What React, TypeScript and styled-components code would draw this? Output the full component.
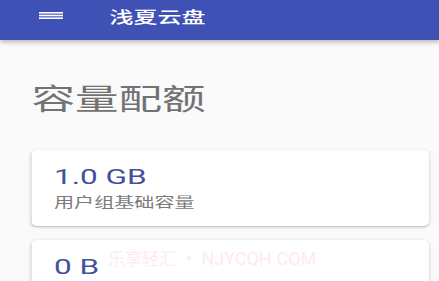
import React from "react";
import styled, { createGlobalStyle } from "styled-components";

const GlobalStyle = createGlobalStyle`
  html, body {
    margin: 0;
    padding: 0;
    background: #fafafa;
    overflow: hidden;
  }
  body {
    font-family: Roboto, "Noto Sans CJK SC", "Noto Sans", sans-serif;
  }
`;

// the screenshot is stretched sideways, so the page is laid out narrow and widened
const Stretch = styled.div`
  width: ${439 / 1.5}px;
  height: 281px;
  overflow: hidden;
  transform: scaleX(1.5);
  transform-origin: left top;
  background: #fafafa;
`;

const AppBar = styled.header`
  height: 40px;
  box-sizing: border-box;
  padding: 0 0 5px 26px;
  display: flex;
  align-items: center;
  background: #3f51b5;
  box-shadow: 0 2px 4px rgba(0, 0, 0, 0.28);
  position: relative;
  z-index: 1;
`;

const MenuIcon = styled.svg`
  width: 16px;
  height: 7px;
  margin-bottom: 4px;
  flex-shrink: 0;
`;

const Title = styled.h1`
  margin: 0 0 0 31px;
  font-size: 16px;
  line-height: 20px;
  font-weight: 500;
  color: #ffffff;
`;

const Content = styled.main`
  padding: 44px 7px 0 21px;
  display: flex;
  flex-direction: column;
`;

const Heading = styled.h2`
  margin: 0 0 34px 0;
  font-size: 29px;
  line-height: 32px;
  font-weight: 400;
  color: #727272;
`;

const CardList = styled.div`
  display: flex;
  flex-direction: column;
  gap: 14px;
`;

const Card = styled.section`
  background: #ffffff;
  border-radius: 4px;
  padding: 15px 15px 14px;
  box-shadow: 0 1px 3px rgba(0, 0, 0, 0.2), 0 1px 1px rgba(0, 0, 0, 0.1);
`;

const Amount = styled.div`
  font-size: 21px;
  line-height: 24px;
  font-weight: 400;
  color: #44509a;
`;

const Label = styled.div`
  margin-top: 5px;
  font-size: 13.4px;
  line-height: 18px;
  color: #7a7a7a;
`;

const Watermark = styled.div`
  position: absolute;
  left: 108px;
  top: 248px;
  font-size: 17px;
  line-height: 22px;
  color: #feeaf5;
  white-space: nowrap;
  pointer-events: none;
  z-index: 2;
`;

const WatermarkLatin = styled.span`
  font-size: 18px;
`;

const quotas: { amount: string; label?: string }[] = [
  { amount: "1.0 GB", label: "用户组基础容量" },
  { amount: "0 B" },
];

const App = () => {
  return (
    <>
      <GlobalStyle />
      <Stretch>
        <AppBar>
          <MenuIcon viewBox="0 0 16 7" preserveAspectRatio="none">
            <rect x="0" y="0" width="16" height="1.6" fill="#fff" />
            <rect x="0" y="2.7" width="16" height="1.6" fill="#fff" />
            <rect x="0" y="5.4" width="16" height="1.6" fill="#fff" />
          </MenuIcon>
          <Title>浅夏云盘</Title>
        </AppBar>
        <Content>
          <Heading>容量配额</Heading>
          <CardList>
            {quotas.map((q) => (
              <Card key={q.amount}>
                <Amount>{q.amount}</Amount>
                {q.label && <Label>{q.label}</Label>}
              </Card>
            ))}
          </CardList>
        </Content>
      </Stretch>
      <Watermark>
        乐享轻汇 ・ <WatermarkLatin>NJYCQH.COM</WatermarkLatin>
      </Watermark>
    </>
  );
};

export default App;
